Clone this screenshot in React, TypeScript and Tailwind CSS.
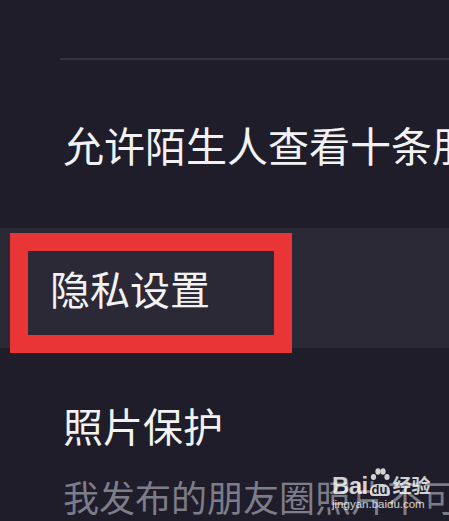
import React from "react";

const cjk = { fontFamily: '"Noto Sans CJK SC", "Noto Sans", sans-serif' };
const latin = { fontFamily: '"Liberation Sans", Arial, sans-serif' };

function Watermark() {
    return (
        <div className="absolute left-[332px] top-[466px] flex flex-col items-start text-white/80 pointer-events-none" style={cjk}>
            <div className="flex items-end h-[30px]">
                <span className="text-[24px] font-bold leading-[20px] tracking-tight" style={latin}>Bai</span>
                <div className="ml-[2px] flex flex-col items-center">
                    <svg width="20" height="15" viewBox="0 0 20 15" className="mb-[1px]">
                        <ellipse cx="3.5" cy="9" rx="2.6" ry="3" fill="currentColor" />
                        <ellipse cx="8" cy="3.5" rx="2.6" ry="3.2" fill="currentColor" />
                        <ellipse cx="13" cy="3.5" rx="2.6" ry="3.2" fill="currentColor" />
                        <ellipse cx="17" cy="9" rx="2.6" ry="3" fill="currentColor" />
                    </svg>
                    <span className="bg-white/80 text-[#1e1d29] text-[13px] font-bold leading-[12px] px-[2px] rounded-t-[7px] rounded-b-[3px]" style={latin}>du</span>
                </div>
                <span className="ml-[3px] text-[19px] leading-[22px] font-bold">经验</span>
            </div>
            <span className="mt-[3px] text-[11.5px] leading-none" style={latin}>jingyan.baidu.com</span>
        </div>
    );
}

export default function App() {
    return (
        <div className="relative w-[449px] h-[521px] overflow-hidden bg-[#1e1d29]" style={cjk}>
            <div className="h-[58px]" />
            <div className="ml-[60px] h-[2px] bg-[#33323e]" />

            <div className="pt-[64px] pl-[63px] whitespace-nowrap text-[41px] leading-[41px] text-[#f2f2f2]">
                允许陌生人查看十条朋友圈
            </div>

            {/* 分组标题 */}
            <div className="mt-[63px] h-[120px] bg-[#2a2935] pl-[50px] pt-[40px]">
                <div className="text-[40px] leading-[40px] text-[#f2f2f2]">隐私设置</div>
            </div>

            <div className="pt-[57px] pl-[63px] text-[40px] leading-[40px] text-[#f2f2f2]">照片保护</div>
            <div className="mt-[33px] pl-[63px] whitespace-nowrap text-[36px] leading-[36px] text-[#7d7c89]">
                我发布的朋友圈照片不可被下载
            </div>

            {/* 红框标注 */}
            <div className="absolute left-[10px] top-[233px] w-[282px] h-[120px] border-[18px] border-[#e93535] pointer-events-none" />

            <Watermark />
        </div>
    );
}
